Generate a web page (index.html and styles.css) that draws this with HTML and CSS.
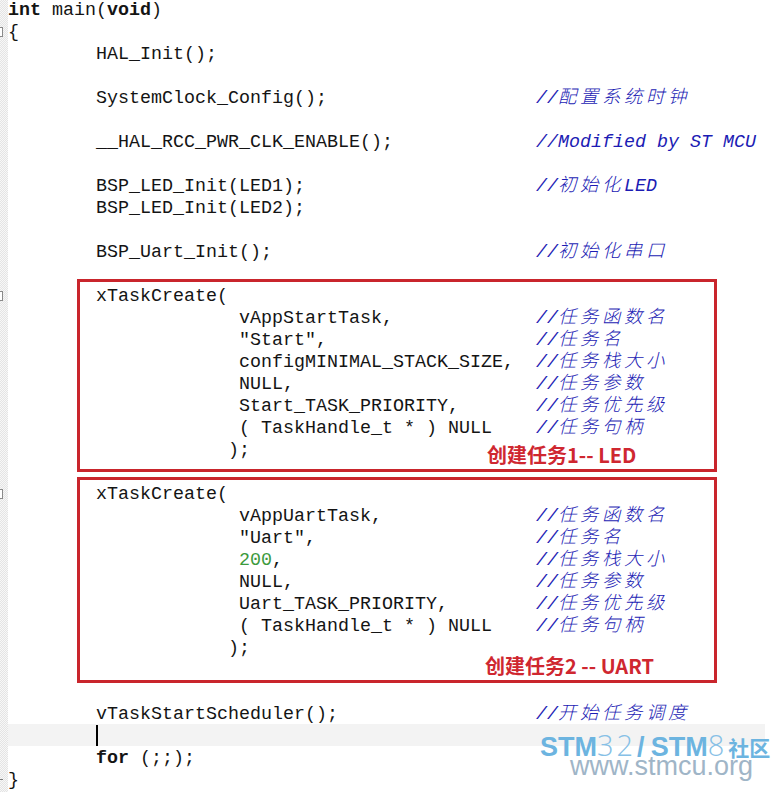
FILE: index.html
```html
<!DOCTYPE html>
<html lang="zh">
<head>
<meta charset="utf-8">
<title>main.c</title>
<link rel="stylesheet" href="styles.css">
</head>
<body>
<div class="page">
  <div class="editor">
    <div class="row"><span class="g"></span><span class="t"><b>int</b> main(<b>void</b>)</span></div>
    <div class="row"><span class="g fold"></span><span class="t">{</span></div>
    <div class="row"><span class="g"></span><span class="t">        HAL_Init();</span></div>
    <div class="row"><span class="g"></span><span class="t"></span></div>
    <div class="row"><span class="g"></span><span class="t"><span class="src">        SystemClock_Config();</span><span class="cm">//<span class="zh">配置系统时钟</span></span></span></div>
    <div class="row"><span class="g"></span><span class="t"></span></div>
    <div class="row"><span class="g"></span><span class="t"><span class="src">        __HAL_RCC_PWR_CLK_ENABLE();</span><span class="cm">//Modified by ST MCU</span></span></div>
    <div class="row"><span class="g"></span><span class="t"></span></div>
    <div class="row"><span class="g"></span><span class="t"><span class="src">        BSP_LED_Init(LED1);</span><span class="cm">//<span class="zh">初始化</span>LED</span></span></div>
    <div class="row"><span class="g"></span><span class="t">        BSP_LED_Init(LED2);</span></div>
    <div class="row"><span class="g"></span><span class="t"></span></div>
    <div class="row"><span class="g"></span><span class="t"><span class="src">        BSP_Uart_Init();</span><span class="cm">//<span class="zh">初始化串口</span></span></span></div>
    <div class="row"><span class="g"></span><span class="t"></span></div>
    <div class="row"><span class="g fold"></span><span class="t">        xTaskCreate(</span></div>
    <div class="row"><span class="g"></span><span class="t"><span class="src">                     vAppStartTask,</span><span class="cm">//<span class="zh">任务函数名</span></span></span></div>
    <div class="row"><span class="g"></span><span class="t"><span class="src">                     "Start",</span><span class="cm">//<span class="zh">任务名</span></span></span></div>
    <div class="row"><span class="g"></span><span class="t"><span class="src">                     configMINIMAL_STACK_SIZE,</span><span class="cm">//<span class="zh">任务栈大小</span></span></span></div>
    <div class="row"><span class="g"></span><span class="t"><span class="src">                     NULL,</span><span class="cm">//<span class="zh">任务参数</span></span></span></div>
    <div class="row"><span class="g"></span><span class="t"><span class="src">                     Start_TASK_PRIORITY,</span><span class="cm">//<span class="zh">任务优先级</span></span></span></div>
    <div class="row"><span class="g"></span><span class="t"><span class="src">                     ( TaskHandle_t * ) NULL</span><span class="cm">//<span class="zh">任务句柄</span></span></span></div>
    <div class="row"><span class="g"></span><span class="t">                    );</span></div>
    <div class="row"><span class="g"></span><span class="t"></span></div>
    <div class="row"><span class="g fold"></span><span class="t">        xTaskCreate(</span></div>
    <div class="row"><span class="g"></span><span class="t"><span class="src">                     vAppUartTask,</span><span class="cm">//<span class="zh">任务函数名</span></span></span></div>
    <div class="row"><span class="g"></span><span class="t"><span class="src">                     "Uart",</span><span class="cm">//<span class="zh">任务名</span></span></span></div>
    <div class="row"><span class="g"></span><span class="t"><span class="src">                     <span class="num">200</span>,</span><span class="cm">//<span class="zh">任务栈大小</span></span></span></div>
    <div class="row"><span class="g"></span><span class="t"><span class="src">                     NULL,</span><span class="cm">//<span class="zh">任务参数</span></span></span></div>
    <div class="row"><span class="g"></span><span class="t"><span class="src">                     Uart_TASK_PRIORITY,</span><span class="cm">//<span class="zh">任务优先级</span></span></span></div>
    <div class="row"><span class="g"></span><span class="t"><span class="src">                     ( TaskHandle_t * ) NULL</span><span class="cm">//<span class="zh">任务句柄</span></span></span></div>
    <div class="row"><span class="g"></span><span class="t">                    );</span></div>
    <div class="row"><span class="g"></span><span class="t"></span></div>
    <div class="row"><span class="g"></span><span class="t"></span></div>
    <div class="row"><span class="g"></span><span class="t"><span class="src">        vTaskStartScheduler();</span><span class="cm">//<span class="zh">开始任务调度</span></span></span></div>
    <div class="row cur"><span class="g"></span><span class="t">        <span class="caret"></span></span></div>
    <div class="row"><span class="g"></span><span class="t">        <b>for</b> (;;);</span></div>
    <div class="row"><span class="g end"></span><span class="t">}</span></div>
  </div>

  <div class="box box1"></div>
  <div class="box box2"></div>
  <div class="label label1">创建任务1-- LED</div>
  <div class="label label2">创建任务2 -- UART</div>

  <div class="mark">
    <div class="mark-top"><span class="mb">STM</span><span class="ml">32</span><span class="ms">/</span><span class="mb">STM</span><span class="ml">8</span><span class="mz">社区</span></div>
    <div class="mark-url">www.stmcu.org</div>
  </div>
</div>
</body>
</html>
```

FILE: styles.css
```css
html, body {
  margin: 0;
  padding: 0;
  background: #ffffff;
  overflow: hidden;
}

.page {
  position: relative;
  width: 778px;
  height: 792px;
  overflow: hidden;
}

.editor {
  width: 765px;
  font-family: "Liberation Mono", "Courier New", monospace;
  font-size: 18.333px;
  color: #141414;
}

.row {
  display: flex;
  height: 22px;
  line-height: 22px;
}

.g {
  flex: 0 0 8px;
  width: 8px;
  background-color: #f2f2f2;
  background-image: repeating-conic-gradient(#e4e4e4 0 25%, #f7f7f7 0 50%);
  background-size: 2px 2px;
  position: relative;
}

.g.fold::before {
  content: "";
  position: absolute;
  left: -1px;
  top: 5px;
  width: 3px;
  height: 8px;
  border: 1px solid #8a8a8a;
  border-left: none;
  background: #fff;
}

.g.end::before {
  content: "";
  position: absolute;
  left: 0;
  top: 9px;
  width: 3px;
  height: 1px;
  background: #7a7a7a;
}

.t {
  flex: 1 1 auto;
  white-space: pre;
}

.row.cur .t {
  background: linear-gradient(#f3f3f3, #f3f3f3) 0 0 / 100% 20px no-repeat;
  box-shadow: 0 -2px 0 #f3f3f3;
}

.src {
  display: inline-block;
  width: 48ch;
}

b {
  font-weight: bold;
}

.cm {
  color: #1c1cb4;
  font-style: italic;
}

.zh {
  font-family: "Noto Sans CJK SC", sans-serif;
  font-weight: 300;
  letter-spacing: 3.67px;
  line-height: 0;
}

.num {
  color: #3d9a3d;
}

.caret {
  display: inline-block;
  width: 2px;
  height: 21px;
  background: #000;
  vertical-align: top;
  margin-top: -1px;
}

.box {
  position: absolute;
  box-sizing: border-box;
  border: 3px solid #c9252c;
}

.box1 {
  left: 77px;
  top: 279px;
  width: 640px;
  height: 193px;
}

.box2 {
  left: 77px;
  top: 477px;
  width: 640px;
  height: 206px;
}

.label {
  position: absolute;
  font-family: "Noto Sans CJK SC", sans-serif;
  font-weight: bold;
  font-size: 20px;
  line-height: 20px;
  color: #cf2730;
  white-space: pre;
}

.label1 {
  left: 487px;
  top: 445px;
}

.label2 {
  left: 485px;
  top: 656px;
}

.mark {
  position: absolute;
  left: 540px;
  top: 736px;
  font-family: "Liberation Sans", Arial, sans-serif;
  white-space: nowrap;
}

.mark-top {
  font-size: 27px;
  line-height: 18px;
  color: #6cb4e0;
}

.mb {
  font-weight: bold;
}

.ml {
  font-family: "Open Sans", sans-serif;
  font-weight: 300;
  font-size: 29px;
  letter-spacing: 3px;
  color: #86c0e6;
}

.ms {
  font-weight: bold;
  margin-left: 1px;
  margin-right: 6px;
}

.mz {
  font-family: "Noto Sans CJK SC", sans-serif;
  font-weight: bold;
  font-size: 21px;
  margin-left: 1px;
}

.mark-url {
  font-size: 27px;
  line-height: 20px;
  color: #9fb5c7;
  margin-left: 30px;
}
```
